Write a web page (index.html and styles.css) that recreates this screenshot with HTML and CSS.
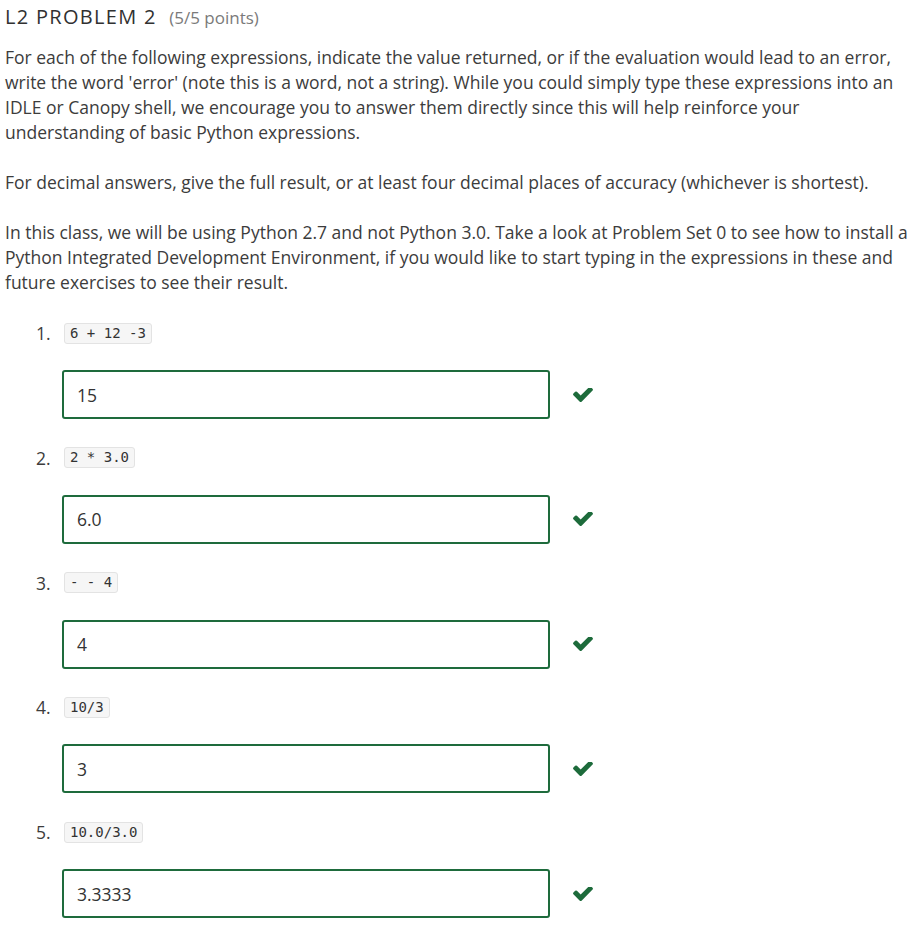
FILE: index.html
```html
<!DOCTYPE html>
<html>
<head>
<meta charset="utf-8">
<link rel="stylesheet" href="styles.css">
</head>
<body>
<div class="problem">
  <h2 class="title">L2 PROBLEM 2 <span class="points">(5/5 points)</span></h2>
  <p>For each of the following expressions, indicate the value returned, or if the evaluation would lead to an error, write the word 'error' (note this is a word, not a string). While you could simply type these expressions into an IDLE or Canopy shell, we encourage you to answer them directly since this will help reinforce your understanding of basic Python expressions.</p>
  <p>For decimal answers, give the full result, or at least four decimal places of accuracy (whichever is shortest).</p>
  <p>In this class, we will be using Python 2.7 and not Python 3.0. Take a look at Problem Set 0 to see how to install a Python Integrated Development Environment, if you would like to start typing in the expressions in these and future exercises to see their result.</p>

  <div class="items">
    <div class="item">
      <div class="q"><span class="num">1.</span><code>6 + 12 -3</code></div>
      <div class="a"><div class="box">15</div><svg class="check" viewBox="121 430 1550 1092"><path d="M1671 566q0 40-28 68l-724 724-136 136q-28 28-68 28t-68-28l-136-136-362-362q-28-28-28-68t28-68l136-136q28-28 68-28t68 28l294 295 656-657q28-28 68-28t68 28l136 136q28 28 28 68z"/></svg></div>
    </div>
    <div class="item">
      <div class="q"><span class="num">2.</span><code>2 * 3.0</code></div>
      <div class="a"><div class="box">6.0</div><svg class="check" viewBox="121 430 1550 1092"><path d="M1671 566q0 40-28 68l-724 724-136 136q-28 28-68 28t-68-28l-136-136-362-362q-28-28-28-68t28-68l136-136q28-28 68-28t68 28l294 295 656-657q28-28 68-28t68 28l136 136q28 28 28 68z"/></svg></div>
    </div>
    <div class="item">
      <div class="q"><span class="num">3.</span><code>- - 4</code></div>
      <div class="a"><div class="box">4</div><svg class="check" viewBox="121 430 1550 1092"><path d="M1671 566q0 40-28 68l-724 724-136 136q-28 28-68 28t-68-28l-136-136-362-362q-28-28-28-68t28-68l136-136q28-28 68-28t68 28l294 295 656-657q28-28 68-28t68 28l136 136q28 28 28 68z"/></svg></div>
    </div>
    <div class="item">
      <div class="q"><span class="num">4.</span><code>10/3</code></div>
      <div class="a"><div class="box">3</div><svg class="check" viewBox="121 430 1550 1092"><path d="M1671 566q0 40-28 68l-724 724-136 136q-28 28-68 28t-68-28l-136-136-362-362q-28-28-28-68t28-68l136-136q28-28 68-28t68 28l294 295 656-657q28-28 68-28t68 28l136 136q28 28 28 68z"/></svg></div>
    </div>
    <div class="item">
      <div class="q"><span class="num">5.</span><code>10.0/3.0</code></div>
      <div class="a"><div class="box">3.3333</div><svg class="check" viewBox="121 430 1550 1092"><path d="M1671 566q0 40-28 68l-724 724-136 136q-28 28-68 28t-68-28l-136-136-362-362q-28-28-28-68t28-68l136-136q28-28 68-28t68 28l294 295 656-657q28-28 68-28t68 28l136 136q28 28 28 68z"/></svg></div>
    </div>
  </div>
</div>
</body>
</html>
```

FILE: styles.css
```css
html, body {
  margin: 0;
  padding: 0;
  background: #fff;
}
body {
  font-family: "Open Sans", "Liberation Sans", sans-serif;
  color: #3c3c3c;
  font-size: 17.5px;
}
.problem {
  padding: 0 5px;
}
.title {
  margin: 0;
  padding-top: 4px;
  font-size: 20px;
  font-weight: 400;
  letter-spacing: 1.3px;
  line-height: 26px;
  color: #313131;
}
.points {
  font-size: 17px;
  letter-spacing: 0;
  color: #7a7a7a;
  margin-left: 6px;
}
p {
  margin: 14px 0 0 0;
  line-height: 25px;
}
p + p {
  margin-top: 25px;
}
.items {
  margin-top: 27px;
  padding-left: 31px;
}
.item {
  height: 124.75px;
}
.q {
  display: flex;
  align-items: center;
  height: 22px;
}
.num {
  width: 28px;
  color: #3c3c3c;
}
code {
  font-family: "DejaVu Sans Mono", "Liberation Mono", monospace;
  font-size: 14px;
  line-height: 19px;
  padding: 0 5px;
  background: #f6f6f6;
  border: 1px solid #e3e3e3;
  border-radius: 3px;
  color: #333;
}
.a {
  display: flex;
  align-items: center;
  margin-top: 26px;
  margin-left: 26px;
}
.box {
  box-sizing: border-box;
  width: 488px;
  height: 49px;
  border: 2px solid #1e6b3c;
  border-radius: 3px;
  padding: 0 13px;
  display: flex;
  align-items: center;
  color: #333;
}
.check {
  width: 20px;
  height: 14px;
  margin-left: 23px;
  fill: #1d6b3b;
}
```
